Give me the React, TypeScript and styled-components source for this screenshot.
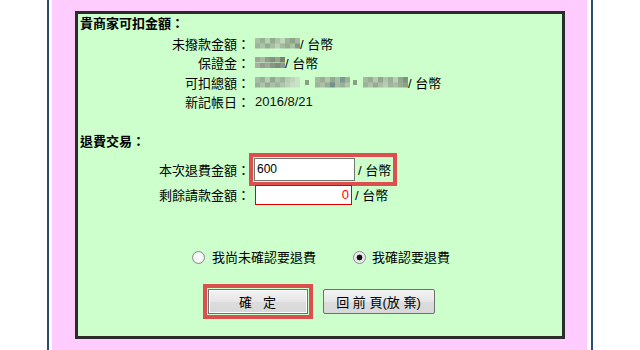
import React from "react";
import styled, { createGlobalStyle } from "styled-components";

const GlobalStyle = createGlobalStyle`
  html, body {
    margin: 0;
    padding: 0;
    background: #ffffff;
  }
  body {
    font-family: "Liberation Sans", "Noto Sans CJK TC", sans-serif;
    font-size: 13px;
    color: #000;
  }
`;

// 打馬賽克的色塊，每格 5px
const blocks = (colors: string[]) =>
  colors.map((c, i) => `${c} ${i * 5}px ${(i + 1) * 5}px`).join(", ");

// 紅框標示（截圖上的註記）
const MARK = "0 0 0 1px #ccffcc, 0 0 0 5px #dc4f4f";

export default function App() {
  return (
    <>
      <GlobalStyle />
      <Frame>
        <PinkArea>
          <GreenBox>
            <Title>貴商家可扣金額：</Title>
            <InfoGrid>
              <Label>未撥款金額：</Label>
              <Value>
                <Mosaic
                  $top={["#a9c0a5", "#96b093", "#b8cfb3", "#93ac90", "#adc3a9", "#bfd6ba", "#9cb497", "#8ca588", "#a4baa0"]}
                  $bottom={["#9db59a", "#adc3a9", "#91ab8e", "#a8bea4", "#bbd1b6", "#a2b99e", "#94ad90", "#abc1a6", "#82997f"]}
                />
                / 台幣
              </Value>
              <Label>保證金：</Label>
              <Value>
                <Mosaic
                  $top={["#9ea99a", "#aab7a5", "#8f9b8b", "#848f80", "#98a394", "#76836f"]}
                  $bottom={["#a6b19f", "#939e8f", "#9ea999", "#8a9586", "#808c7c", "#8c9888"]}
                />
                / 台幣
              </Value>
              <Label>可扣總額：</Label>
              <Value>
                <Mosaic
                  $top={["#a7bca4", "#9ab096", "#b8cdb3", "#90a88d", "#abc0a7", "#9db499", "#b6cbb1", "#c0d6bb", "#cae2c6"]}
                  $bottom={["#9bb298", "#adc2a9", "#94ab90", "#aac0a6", "#9eb59a", "#b0c5ac", "#bcd1b7", "#c6dec2", "#cae2c6"]}
                />
                <Dot $gap={5} />
                <Mosaic
                  $gap={6}
                  $top={["#a4baa1", "#99ae95", "#b2c7ad", "#93a990", "#a8bda4", "#7a9894", "#9cb298"]}
                  $bottom={["#9db39a", "#acc0a8", "#96ac93", "#71908c", "#a5baa1", "#9ab096", "#b0c5ac"]}
                />
                <Dot $gap={3} />
                <Mosaic
                  $gap={6}
                  $top={["#a6baa2", "#98ad94", "#b6cab1", "#92a88e", "#afc4ab", "#9bb197", "#bacfb5", "#93a88f", "#7e947b"]}
                  $bottom={["#9cb299", "#adc1a8", "#95ab91", "#aabea5", "#b8ccb3", "#9fb59b", "#a9bda4", "#97ac93", "#8ba188"]}
                />
                / 台幣
              </Value>
              <Label>新記帳日：</Label>
              <Value $dark>2016/8/21</Value>
            </InfoGrid>

            <Title $gapTop>退費交易：</Title>
            <EntryGrid>
              <Label>本次退費金額：</Label>
              <Highlight>
                <AmountInput defaultValue="600" />
                <Unit>/ 台幣</Unit>
              </Highlight>
              <Label>剩餘請款金額：</Label>
              <Field>
                <RemainInput defaultValue="0" readOnly />
                <Unit>/ 台幣</Unit>
              </Field>
            </EntryGrid>

            <RadioRow>
              <RadioItem>
                <Radio type="radio" name="confirm" />
                我尚未確認要退費
              </RadioItem>
              <RadioItem $tight>
                <Radio type="radio" name="confirm" defaultChecked />
                我確認要退費
              </RadioItem>
            </RadioRow>

            <ButtonRow>
              <Button $width={100} $marked>
                {"確   定"}
              </Button>
              <Button $width={112}>回 前 頁(放 棄)</Button>
            </ButtonRow>
          </GreenBox>
        </PinkArea>
      </Frame>
    </>
  );
}

// 外框：左右藍線
const Frame = styled.div`
  margin-left: 47px;
  width: 535px;
  padding: 0 4px 0 3px;
  border-left: 2px solid #2d4a73;
  border-right: 2px solid #2d4a73;
  min-height: 100vh;
`;

const PinkArea = styled.div`
  background: #ffccff;
  min-height: 100vh;
  padding: 11px 22px 20px 23px;
  box-sizing: border-box;
`;

const GreenBox = styled.div`
  background: #ccffcc;
  border: 3px solid #2b2b2b;
  padding: 0 0 22px 2px;
`;

const Title = styled.div<{ $gapTop?: boolean }>`
  font-weight: bold;
  line-height: 19.5px;
  margin-top: ${(p) => (p.$gapTop ? "20.75px" : "0")};
`;

const InfoGrid = styled.div`
  display: grid;
  grid-template-columns: 170px 1fr;
  column-gap: 5px;
  grid-auto-rows: 19.5px;
  align-items: center;
`;

const Label = styled.div`
  text-align: right;
  white-space: nowrap;
`;

const Value = styled.div<{ $dark?: boolean }>`
  display: flex;
  align-items: center;
  white-space: pre;
  color: ${(p) => (p.$dark ? "#111" : "#000")};
`;

const Mosaic = styled.span<{ $top: string[]; $bottom: string[]; $gap?: number }>`
  display: inline-block;
  width: ${(p) => p.$top.length * 5}px;
  height: 11px;
  margin-left: ${(p) => p.$gap ?? 0}px;
  background:
    linear-gradient(90deg, ${(p) => blocks(p.$top)}) top left / 100% 50% no-repeat,
    linear-gradient(90deg, ${(p) => blocks(p.$bottom)}) bottom left / 100% 50% no-repeat;
`;

const Dot = styled.span<{ $gap: number }>`
  display: inline-block;
  width: 4px;
  height: 5px;
  margin-left: ${(p) => p.$gap}px;
  background: #86a083;
`;

const EntryGrid = styled.div`
  display: grid;
  grid-template-columns: 170px auto;
  grid-template-rows: 23px 20px;
  column-gap: 4px;
  row-gap: 4px;
  margin-top: 6px;
  align-items: center;
  justify-items: start;

  & > ${Label} {
    justify-self: stretch;
  }
`;

const Field = styled.div`
  display: flex;
  align-items: center;
  height: 100%;
  padding-left: 1px;
`;

const Highlight = styled(Field)`
  padding-left: 0;
  padding-right: 1px;
  box-shadow: ${MARK};
`;

const AmountInput = styled.input`
  box-sizing: border-box;
  width: 101px;
  height: 23px;
  margin: 0;
  padding: 0 2px;
  border: 1px solid #6f7a70;
  border-radius: 0;
  background: #fff;
  font-family: "Liberation Sans", sans-serif;
  font-size: 12px;
  color: #000;
  outline: none;
`;

const RemainInput = styled(AmountInput)`
  width: 97px;
  height: 20px;
  border: 1px solid #e00000;
  text-align: right;
  color: #ff0000;
  font-size: 13px;
`;

const Unit = styled.span`
  margin-left: 3px;
  white-space: pre;
`;

const RadioRow = styled.div`
  display: flex;
  justify-content: center;
  gap: 37px;
  margin-top: 43px;
  line-height: 19px;
`;

const RadioItem = styled.label<{ $tight?: boolean }>`
  display: inline-flex;
  align-items: center;
  gap: ${(p) => (p.$tight ? 6 : 7)}px;
`;

const Radio = styled.input`
  appearance: none;
  width: 13px;
  height: 13px;
  margin: 0;
  border: 1px solid #8a8a8a;
  border-radius: 50%;
  background: radial-gradient(circle, #ffffff 0%, #f4f4f4 55%, #dcdcdc 100%);
  box-sizing: border-box;

  &:checked {
    background: radial-gradient(circle, #141414 0 2.6px, #e6e6e6 3.2px, #f8f8f8 100%);
  }
`;

const ButtonRow = styled.div`
  display: flex;
  justify-content: center;
  gap: 15px;
  margin-top: 22px;
`;

const Button = styled.button<{ $width: number; $marked?: boolean }>`
  width: ${(p) => p.$width}px;
  height: 25px;
  padding: 0;
  border: 1px solid #707070;
  border-radius: ${(p) => (p.$marked ? 0 : 2)}px;
  background: linear-gradient(#f3f3f3, #e6e6e6 50%, #dcdcdc 51%, #d8d8d8);
  font-family: "Liberation Sans", "Noto Sans CJK TC", sans-serif;
  font-size: 13px;
  color: #000;
  white-space: pre;
  outline: none;
  box-shadow: ${(p) => (p.$marked ? `inset 0 0 0 1px #fdfdfd, ${MARK}` : "none")};
`;
